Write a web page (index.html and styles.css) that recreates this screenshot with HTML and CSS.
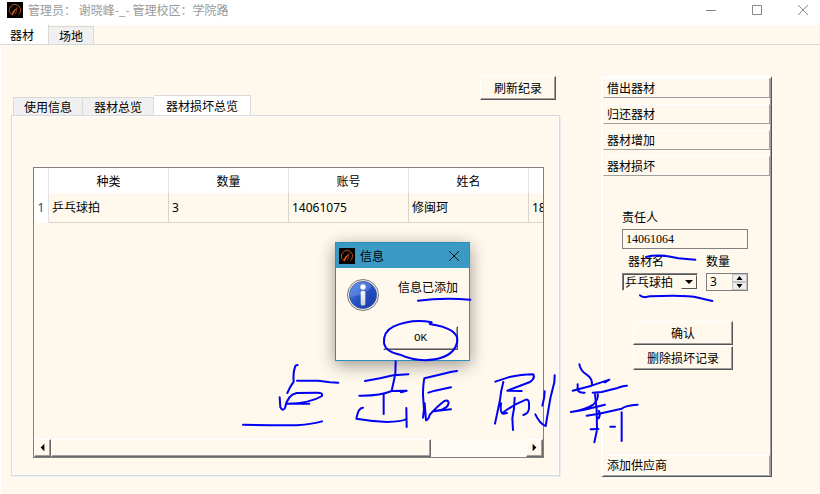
FILE: index.html
```html
<!DOCTYPE html>
<html lang="zh-CN">
<head>
<meta charset="utf-8">
<meta name="viewport" content="width=device-width, initial-scale=1">
<title>管理员</title>
<link rel="stylesheet" href="styles.css">
</head>
<body>
<header class="titlebar">
  <svg class="logo" viewBox="0 0 16 16" aria-hidden="true">
    <rect width="16" height="16" fill="#000"/>
    <path d="M5 12.800A5.600 5.600 0 1 1 11 12.800" fill="none" stroke="#b8501c" stroke-width="1"/>
    <path d="M3 5l1.500 1M8.500 12L10 7" stroke="#8a3a12" fill="none"/>
    <path d="M12 4L8 9 5.500 13.500 4.500 12 6.500 8.500z" fill="#e0601c"/>
  </svg>
  <h1 class="title">管理员： 谢晓峰-_- 管理校区：学院路</h1>
  <div class="window-buttons">
    <button class="window-button" aria-label="最小化"><svg viewBox="0 0 16 16"><path d="M3 8.500h10"/></svg></button>
    <button class="window-button" aria-label="最大化"><svg viewBox="0 0 16 16"><path d="M3.500 3.500h9v9h-9z"/></svg></button>
    <button class="window-button" aria-label="关闭"><svg viewBox="0 0 16 16"><path d="M3 3l10 10M13 3L3 13"/></svg></button>
  </div>
</header>

<nav class="tabs main-tabs">
  <button class="tab active">器材</button>
  <button class="tab">场地</button>
</nav>

<main class="main">
  <section class="records">
    <div class="records-head">
      <div class="tabs">
        <button class="tab">使用信息</button>
        <button class="tab">器材总览</button>
        <button class="tab active">器材损坏总览</button>
      </div>
      <button class="push refresh">刷新纪录</button>
    </div>
    <div class="pane">
      <div class="grid-frame">
        <div class="grid-view">
          <table class="grid">
            <colgroup><col class="col-index"><col><col><col><col><col></colgroup>
            <thead>
              <tr><th></th><th scope="col">种类</th><th scope="col">数量</th><th scope="col">账号</th><th scope="col">姓名</th><th></th></tr>
            </thead>
            <tbody>
              <tr><th scope="row">1</th><td>乒乓球拍</td><td>3</td><td>14061075</td><td>修闽珂</td><td>18</td></tr>
            </tbody>
          </table>
        </div>
        <div class="scrollbar">
          <button class="scroll-arrow" aria-label="向左"><svg viewBox="0 0 16 16"><path d="M10 3v8L6 7z"/></svg></button>
          <div class="scroll-track"><div class="scroll-thumb"></div></div>
          <button class="scroll-arrow" aria-label="向右"><svg viewBox="0 0 16 16"><path d="M6 3v8l4-4z"/></svg></button>
        </div>
      </div>
    </div>
  </section>

  <aside class="toolbox">
    <button class="tool">借出器材</button>
    <button class="tool">归还器材</button>
    <button class="tool">器材增加</button>
    <button class="tool">器材损坏</button>
    <form class="damage-form">
      <label for="person">责任人</label>
      <input class="person" id="person" type="text" value="14061064">
      <div class="pair">
        <div class="field">
          <label class="inset-label" for="kind">器材名</label>
          <div class="combo">
            <select id="kind"><option>乒乓球拍</option></select>
            <svg class="combo-arrow" viewBox="0 0 14 12" aria-hidden="true"><path d="M3 4h8L7 8z"/></svg>
          </div>
        </div>
        <div class="field">
          <label for="count">数量</label>
          <div class="spin">
            <input id="count" type="number" value="3">
            <div class="spin-buttons">
              <button type="button" aria-label="增加"><svg viewBox="0 0 13 6"><path d="M3.500 5h6l-3-4z"/></svg></button>
              <button type="button" aria-label="减少"><svg viewBox="0 0 13 6"><path d="M3.500 1h6l-3 4z"/></svg></button>
            </div>
          </div>
        </div>
      </div>
      <div class="actions">
        <button class="push" type="button">确认</button>
        <button class="push" type="button">删除损坏记录</button>
      </div>
    </form>
    <button class="tool">添加供应商</button>
  </aside>
</main>

<div class="dialog" role="dialog" aria-labelledby="dialog-title">
  <div class="dialog-bar">
    <svg class="logo" viewBox="0 0 16 16" aria-hidden="true">
      <rect width="16" height="16" fill="#000"/>
      <path d="M5 12.800A5.600 5.600 0 1 1 11 12.800" fill="none" stroke="#b8501c" stroke-width="1"/>
      <path d="M3 5l1.500 1M8.500 12L10 7" stroke="#8a3a12" fill="none"/>
      <path d="M12 4L8 9 5.500 13.500 4.500 12 6.500 8.500z" fill="#e0601c"/>
    </svg>
    <h2 class="dialog-title" id="dialog-title">信息</h2>
    <button class="dialog-close" aria-label="关闭"><svg viewBox="0 0 16 16"><path d="M3 3l10 10M13 3L3 13"/></svg></button>
  </div>
  <div class="dialog-body">
    <svg class="info" viewBox="0 0 32 32" aria-hidden="true">
      <defs>
        <linearGradient id="blue" x1="0" y1="0" x2="1" y2="1"><stop offset="0" stop-color="#5f8ae6"/><stop offset=".5" stop-color="#2450c4"/><stop offset="1" stop-color="#1a36a8"/></linearGradient>
        <linearGradient id="stem" x1="0" y1="0" x2="0" y2="1"><stop offset="0" stop-color="#fff"/><stop offset="1" stop-color="#c9cdd4"/></linearGradient>
      </defs>
      <circle cx="16" cy="16" r="15.500" fill="#f2f2f2" stroke="#777"/>
      <circle cx="16" cy="16" r="13.600" fill="url(#blue)" stroke="#3a5590" stroke-width=".8"/>
      <path d="M2.800 18A13.300 13.300 0 0 1 25 6.500Q20 16 2.800 18z" fill="#86a8f0" opacity=".35"/>
      <circle cx="16" cy="8" r="2.700" fill="#fff"/>
      <rect x="13.700" y="12" width="4.600" height="14.500" rx="1.500" fill="url(#stem)"/>
    </svg>
    <p class="message">信息已添加</p>
    <button class="push ok">OK</button>
  </div>
</div>

<svg class="ink" width="820" height="494" viewBox="0 0 820 494" aria-hidden="true">
  <g transform="translate(230 350) scale(.33333)">
    <path d="M203 45Q195 45 194 55Q189 70 191 95L180 112L172 129"/>
    <path d="M201 92L265 92L300 97L325 98"/>
    <path d="M149 142L151 172Q158 185 165 174Q172 135 200 129L262 128Q280 128 276 138Q240 160 172 161L238 161"/>
    <path d="M39 224L120 226L200 226Q250 222 276 214"/>
    <path d="M497 34L496 72L485 122M405 93L450 85L490 76L535 73"/>
    <path d="M388 137Q450 138 485 123L530 122L513 127M461 132L461 192"/>
    <path d="M399 173Q385 172 379 206Q420 213 470 216Q515 215 529 207M529 174L530 231"/>
  </g>
  <g transform="translate(405 355) scale(.33333)">
    <path d="M156 48L140 50L100 60L58 70Q54 90 54 120L57 165L54 188L59 145L63 196Q70 195 74 180Q90 160 118 138Q130 133 131 145Q128 158 110 164L86 169L138 163"/>
    <path d="M70 113L90 107L138 97"/>
  </g>
  <g transform="translate(440 350) scale(.33333)">
    <path d="M166 95L205 82Q245 73 280 73Q286 85 270 96L202 122L245 123"/>
    <path d="M190 96Q182 125 180 150L165 221M183 160Q180 190 190 191L201 189M187 190Q215 166 258 149Q268 147 267 165Q270 190 250 195M224 143L222 175L217 205L219 240"/>
    <path d="M314 124Q314 145 307 167M344 76L343 97L331 145L317 228Q300 222 286 193"/>
  </g>
  <g transform="translate(560 355) scale(.33333)">
    <path d="M58 28Q62 48 80 59Q97 70 96 90M38 107L95 92L148 74L135 82M53 88L53 106Q58 114 74 113"/>
    <path d="M98 113L125 111L170 100Q190 91 201 92M113 115Q117 132 100 149Q75 165 33 171L70 165L135 149M80 182L117 176L185 161Q196 151 233 149"/>
    <path d="M105 118L110 165L111 225L103 262M117 168Q122 180 116 190M92 223L115 222M151 215L165 215M185 172L185 258"/>
  </g>
  <g transform="translate(325 235) scale(.33333)">
    <path d="M279 197Q350 188 436 194"/>
    <path d="M320 262Q260 250 205 275Q174 290 177 325Q182 350 225 359Q275 382 330 373Q390 362 397 318Q400 280 314 267"/>
  </g>
  <g transform="translate(590 190) scale(.33333)">
    <path d="M168 201Q210 191 265 205L316 209M150 316Q158 325 180 319Q290 314 325 323L367 333"/>
  </g>
</svg>
</body>
</html>
```

FILE: styles.css
```css
:root {
  --paper: #fff8ec;
  --line: #d9d9d9;
  --shade: #a0a0a0;
  --dark: #555;
}

* { box-sizing: border-box; }

body {
  margin: 0;
  min-height: 100vh;
  display: flex;
  flex-direction: column;
  position: relative;
  background: var(--paper);
  color: #000;
  font: 12px/16px "Noto Sans CJK SC", sans-serif;
}

button, input, select {
  margin: 0;
  padding: 0;
  border: 0;
  border-radius: 0;
  background: none;
  color: inherit;
  font: inherit;
}

svg { display: block; }

h1, h2, p { margin: 0; font-size: 12px; font-weight: 400; }

.titlebar {
  display: flex;
  align-items: center;
  height: 25px;
  padding: 0 9px 6px 7px;
  background: #fff;
}

.logo { width: 16px; height: 16px; flex: none; }

.title { margin-left: 5px; color: #999; white-space: pre; }

.window-buttons { display: flex; gap: 30px; margin-left: auto; }

.window-button, .window-button svg { width: 16px; height: 16px; }

.window-button path { fill: none; stroke: #888; }

.tabs { display: flex; align-items: flex-end; }

.tab {
  height: 18px;
  padding: 0 11px;
  border: 1px solid var(--line);
  border-width: 1px 1px 0 0;
  background: #f0f0f0;
  line-height: 16px;
}

.tab.active { height: 20px; background: #fff; }

.main-tabs { height: 20px; border-bottom: 1px solid var(--line); }

.main-tabs .tab { padding: 0 10px; }

.main-tabs .active { padding: 0 14px 0 10px; border-top-color: #fff; }

.main {
  flex: 1;
  display: grid;
  grid-template-columns: minmax(0, 1fr) 171px;
  gap: 41px;
  padding: 31px 48px 17px 10px;
  border-left: 1px solid #fff;
}

.records { display: flex; flex-direction: column; padding-bottom: 1px; }

.records-head {
  display: flex;
  justify-content: space-between;
  height: 39px;
  padding: 0 4px 0 2px;
}

.records-head .tab:first-child { padding: 0 10px; border-left-width: 1px; }

.records-head .active { padding: 0 12px; }

.push {
  height: 24px;
  border: 1px solid;
  border-color: #fff var(--dark) var(--dark) #fff;
  box-shadow: inset -1px -1px var(--shade);
  background: var(--paper);
  line-height: 20px;
}

.refresh { width: 76px; }

.pane {
  flex: 1;
  display: flex;
  padding: 51px 15px 17px 21px;
  border: 1px solid var(--line);
  box-shadow: inset 1px 1px #fff, inset -1px -1px #fff, 1px 1px #eee;
}

.grid-frame {
  flex: 1;
  min-width: 0;
  display: flex;
  flex-direction: column;
  border: 1px solid #808080;
}

.grid-view { flex: 1; overflow: hidden; }

.grid { width: 615px; table-layout: fixed; border-collapse: separate; border-spacing: 0; }

.col-index { width: 15px; }

.grid th, .grid td { padding: 0 3px; border-right: 1px solid #d8d4ca; font-weight: 400; text-align: left; }

.grid th { padding: 0; background: #fff; text-align: center; border-right-color: #e2e2e2; }

.grid thead th { height: 25px; }

.grid tbody th, .grid td { height: 30px; font-family: "Noto Sans", "Noto Sans CJK SC", sans-serif; }

.grid tbody th { color: #234a78; }

.grid td { border-bottom: 1px solid #d8d4ca; }

.scrollbar { display: flex; height: 18px; }

.scroll-arrow, .scroll-thumb {
  border: 1px solid;
  border-color: #fff #696969 #696969 #fff;
  box-shadow: inset -1px -1px var(--shade);
  background: var(--paper);
}

.scroll-arrow { width: 17px; flex: none; }

.scroll-arrow svg { width: 15px; height: 15px; }

.scroll-track { flex: 1; background: #fffcf6; }

.scroll-thumb { width: 80%; height: 100%; }

.toolbox {
  display: flex;
  flex-direction: column;
  border: 2px solid;
  border-color: #fff var(--dark) var(--dark) #fff;
  border-right-width: 1px;
  border-bottom-width: 1px;
  box-shadow: inset -1px -1px var(--shade);
  padding: 0 1px 1px 0;
}

.tool {
  height: 20px;
  margin-bottom: 6px;
  padding-left: 3px;
  border: 1px solid;
  border-color: #fff var(--shade) var(--shade) transparent;
  line-height: 18px;
  text-align: left;
}

.tool:nth-of-type(4), .tool:last-child { margin-bottom: 0; }

.tool:last-child { border-bottom-color: #fff; }

.damage-form {
  flex: 1;
  display: flex;
  flex-direction: column;
  gap: 4px;
  padding: 33px 22px 0 19px;
}

.damage-form label { display: block; height: 16px; }

.person {
  width: 100%;
  height: 20px;
  padding: 0 3px;
  border: 1px solid #808080;
  font-family: "Liberation Serif", serif;
}

.pair { display: grid; grid-template-columns: 76px minmax(0, 1fr); gap: 8px; }

.field { display: flex; flex-direction: column; gap: 4px; }

.inset-label { padding-left: 6px; }

.combo {
  position: relative;
  height: 18px;
  border: 1px solid;
  border-color: #808080 #fff #fff #808080;
  box-shadow: inset 1px 1px var(--dark);
}

.combo select {
  width: 100%;
  height: 16px;
  padding-left: 2px;
  appearance: none;
  line-height: 16px;
}

.combo-arrow {
  position: absolute;
  top: 1px;
  right: 0;
  width: 16px;
  height: 14px;
  border: 1px solid;
  border-color: #fff var(--dark) var(--dark) #fff;
  background: var(--paper);
  pointer-events: none;
}

.spin { display: flex; height: 18px; border: 1px solid #808080; }

.spin input {
  flex: 1;
  min-width: 0;
  padding-left: 3px;
  appearance: textfield;
  font-family: "Noto Sans", sans-serif;
}

.spin input::-webkit-inner-spin-button { appearance: none; margin: 0; }

.spin-buttons { display: flex; flex-direction: column; width: 15px; }

.spin-buttons button { flex: 1; min-height: 0; border: 1px solid #c4c4c4; background: #eee; }

.spin-buttons svg { width: 13px; height: 6px; }

.actions {
  display: flex;
  flex-direction: column;
  gap: 1px;
  margin-top: 26px;
  padding: 0 15px 0 11px;
}

.dialog {
  position: absolute;
  top: 242px;
  left: 335px;
  width: 135px;
  border: 1px solid #2c8dc0;
  background: var(--paper);
  box-shadow: 0 4px 16px rgba(0, 0, 0, .4);
}

.dialog-bar {
  display: flex;
  align-items: center;
  height: 25px;
  padding: 0 7px 0 3px;
  background: #3a9ac4;
}

.dialog-title { margin-left: 5px; }

.dialog-close { margin-left: auto; }

.dialog-close svg { width: 16px; height: 16px; }

.dialog-close path { fill: none; stroke: #111; }

.dialog-body {
  display: grid;
  grid-template-columns: 32px 1fr;
  grid-template-rows: 32px 24px;
  row-gap: 15px;
  padding: 11px 11px 10px;
}

.info { width: 32px; height: 32px; }

.message { text-align: right; }

.ok {
  grid-column: 1 / -1;
  justify-self: end;
  width: 75px;
  font: 11px/20px "Liberation Mono", monospace;
}

.ink { position: absolute; top: 0; left: 0; pointer-events: none; }

.ink path {
  fill: none;
  stroke: #0000f5;
  stroke-width: 6;
  stroke-linecap: round;
  stroke-linejoin: round;
}
```
